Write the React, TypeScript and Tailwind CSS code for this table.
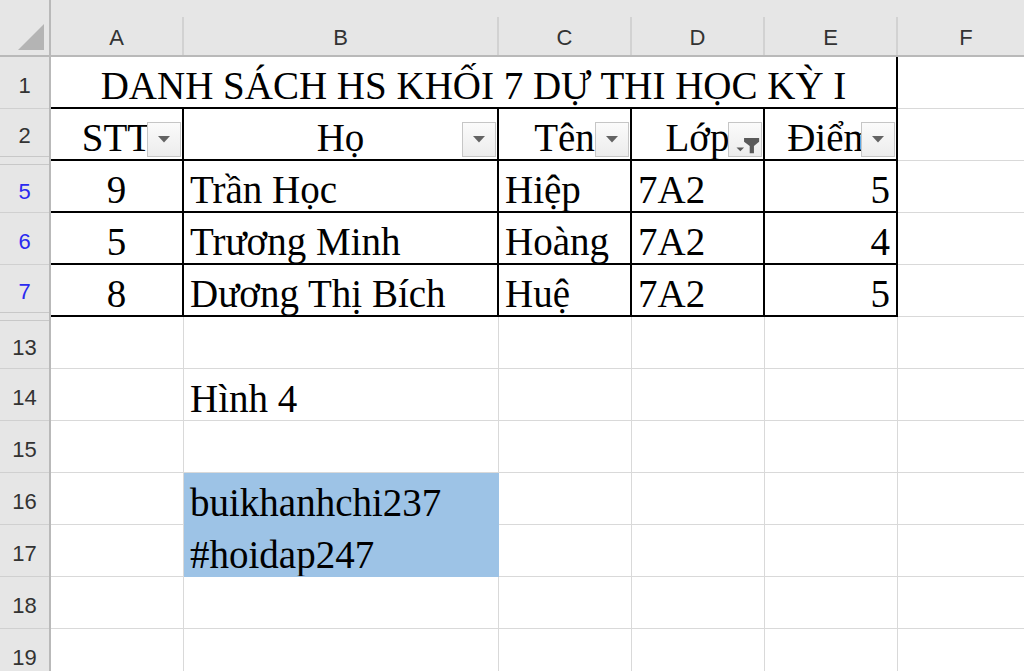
import React from "react";

const SERIF = "font-['Liberation_Serif','Times_New_Roman',serif]";

function DropBtn({ filtered }: { filtered?: boolean }) {
  return (
    <div className="absolute right-[1px] bottom-[2px] w-[34px] h-[35px] border border-[#c6c6c6] bg-gradient-to-b from-[#fbfbfb] to-[#ececec] flex items-center justify-center">
      {filtered ? (
        <svg width="34" height="35" viewBox="0 0 34 35">
          <polygon points="8,26 16,26 12,30" fill="#5a5a5a" />
          <polygon points="16,16 32,16 32,20 26.5,24.5 26.5,32 22,32 22,24.5 16,20" fill="#5a5a5a" />
        </svg>
      ) : (
        <svg width="12" height="7" viewBox="0 0 12 7">
          <polygon points="0,0 12,0 6,6.5" fill="#636363" />
        </svg>
      )}
    </div>
  );
}

type CellSpec = {
  text?: string;
  align?: "left" | "center" | "right";
  filter?: "drop" | "funnel";
  blue?: boolean;
  span?: number;
};

function RowHeader({ n, blue, dblTop, dblBottom }: { n: string; blue?: boolean; dblTop?: boolean; dblBottom?: boolean }) {
  return (
    <div className="h-[52px] bg-[#e6e6e6] border-r-2 border-r-[#b9b9b9] flex flex-col">
      {dblTop && <div className="h-[4px] border-b border-[#c8c8c8] shrink-0" />}
      <div
        className={`flex-1 flex items-center justify-center pt-[5px] font-['Liberation_Sans',Arial,sans-serif] text-[22px] ${
          blue ? "text-[#2a2af0]" : "text-[#333333]"
        } ${dblBottom ? "border-b border-[#c8c8c8]" : "border-b border-[#d0d0d0]"}`}
      >
        {n}
      </div>
      {dblBottom && <div className="h-[4px] shrink-0" />}
    </div>
  );
}

function DataCell({ spec, black }: { spec: CellSpec; black: boolean }) {
  const align = spec.align ?? "left";
  const just =
    align === "center" ? "justify-center" : align === "right" ? "justify-end pr-[6px]" : "justify-start pl-[6px]";
  const border = spec.blue
    ? "border-r border-b border-[#9dc3e6]"
    : black
    ? "border-r-2 border-b-2 border-black"
    : "border-r border-b border-[#d9d9d9]";
  return (
    <div
      className={`relative h-[52px] overflow-hidden flex items-end pb-[2px] ${just} ${border} ${
        spec.blue ? "bg-[#9dc3e6]" : "bg-white"
      } ${spec.span === 5 ? "col-span-5" : ""}`}
    >
      {spec.text && (
        <span className={`${SERIF} text-[39px] leading-[38px] whitespace-nowrap text-black`}>{spec.text}</span>
      )}
      {spec.filter && <DropBtn filtered={spec.filter === "funnel"} />}
    </div>
  );
}

const rows: { n: string; blue?: boolean; table?: boolean; cells: CellSpec[]; dblTop?: boolean; dblBottom?: boolean }[] = [
  {
    n: "1",
    table: true,
    cells: [{ text: "DANH SÁCH HS KHỐI 7 DỰ THI HỌC KỲ I", align: "center", span: 5 }, {}],
  },
  {
    n: "2",
    table: true,
    dblBottom: true,
    cells: [
      { text: "STT", align: "center", filter: "drop" },
      { text: "Họ", align: "center", filter: "drop" },
      { text: "Tên", align: "center", filter: "drop" },
      { text: "Lớp", align: "center", filter: "funnel" },
      { text: "Điểm", align: "center", filter: "drop" },
      {},
    ],
  },
  {
    n: "5",
    blue: true,
    table: true,
    dblTop: true,
    cells: [{ text: "9", align: "center" }, { text: "Trần Học" }, { text: "Hiệp" }, { text: "7A2" }, { text: "5", align: "right" }, {}],
  },
  {
    n: "6",
    blue: true,
    table: true,
    cells: [{ text: "5", align: "center" }, { text: "Trương Minh" }, { text: "Hoàng" }, { text: "7A2" }, { text: "4", align: "right" }, {}],
  },
  {
    n: "7",
    blue: true,
    table: true,
    dblBottom: true,
    cells: [{ text: "8", align: "center" }, { text: "Dương Thị Bích" }, { text: "Huệ" }, { text: "7A2" }, { text: "5", align: "right" }, {}],
  },
  { n: "13", dblTop: true, cells: [{}, {}, {}, {}, {}, {}] },
  { n: "14", cells: [{}, { text: "Hình 4" }, {}, {}, {}, {}] },
  { n: "15", cells: [{}, {}, {}, {}, {}, {}] },
  { n: "16", cells: [{}, { text: "buikhanhchi237", blue: true }, {}, {}, {}, {}] },
  { n: "17", cells: [{}, { text: "#hoidap247", blue: true }, {}, {}, {}, {}] },
  { n: "18", cells: [{}, {}, {}, {}, {}, {}] },
  { n: "19", cells: [{}, {}, {}, {}, {}, {}] },
];

export default function App() {
  const letters = ["A", "B", "C", "D", "E", "F"];
  return (
    <div className="w-[1024px] h-[671px] overflow-hidden bg-white">
      <div className="grid grid-cols-[51px_133px_315px_133px_133px_133px_138px] w-max">
        {/* corner */}
        <div className="h-[57px] bg-[#e6e6e6] border-b-2 border-b-[#b9b9b9] border-r-2 border-r-[#b9b9b9] flex items-end justify-end pr-[5px] pb-[5px]">
          <svg width="26" height="26" viewBox="0 0 26 26">
            <polygon points="26,0 26,26 0,26" fill="#b4b4b4" />
          </svg>
        </div>
        {letters.map((l) => (
          <div key={l} className="h-[57px] bg-[#e6e6e6] border-b-2 border-b-[#b9b9b9] flex flex-col">
            <div className="h-[17px] shrink-0" />
            <div className="flex-1 border-r-2 border-r-[#d2d2d2] flex items-center justify-center pt-[2px] font-['Liberation_Sans',Arial,sans-serif] text-[22px] text-[#333333]">
              {l}
            </div>
          </div>
        ))}
        {rows.map((r) => (
          <React.Fragment key={r.n}>
            <RowHeader n={r.n} blue={r.blue} dblTop={r.dblTop} dblBottom={r.dblBottom} />
            {r.cells.map((c, i) => {
              const isF = r.n === "1" ? i === 1 : i === 5;
              return <DataCell key={i} spec={c} black={!!r.table && !isF} />;
            })}
          </React.Fragment>
        ))}
      </div>
    </div>
  );
}
